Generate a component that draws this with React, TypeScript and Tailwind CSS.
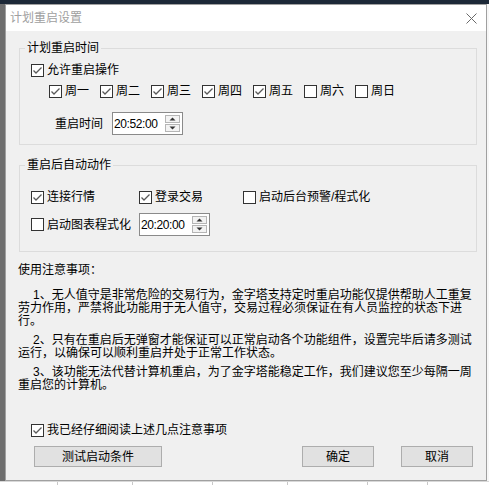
import React from "react";

const font = "font-['Liberation_Sans','Noto_Sans_CJK_SC',sans-serif]";

function Check({ checked }: { checked?: boolean }) {
  return (
    <span className="flex h-[13px] w-[13px] shrink-0 items-center justify-center border border-[#333333] bg-white">
      {checked && (
        <svg width="11" height="11" viewBox="0 0 11 11">
          <path d="M1.5 5.5 L4 8 L9.5 2.5" fill="none" stroke="#5a5a5a" strokeWidth="1.3" />
        </svg>
      )}
    </span>
  );
}

function CheckItem({ label, checked, className = "" }: { label: string; checked?: boolean; className?: string }) {
  return (
    <label className={`flex items-center gap-[3px] ${className}`}>
      <Check checked={checked} />
      <span className="whitespace-nowrap leading-[14px]">{label}</span>
    </label>
  );
}

function TimeSpin({ value }: { value: string }) {
  return (
    <div className="flex h-[23px] w-[71px] items-center border border-[#8a8a8a] bg-white pl-[1px] pr-[2px]">
      <span className="flex-1 text-[12px] tracking-[-0.4px] text-black">{value}</span>
      <div className="flex flex-col gap-[1px]">
        <div className="flex h-[8px] w-[15px] items-center justify-center border border-[#b5b5b5] bg-[#f3f3f3]">
          <svg width="7" height="4" viewBox="0 0 7 4">
            <path d="M0.5 3.5 L3.5 0.5 L6.5 3.5 Z" fill="#333" />
          </svg>
        </div>
        <div className="flex h-[8px] w-[15px] items-center justify-center border border-[#b5b5b5] bg-[#f3f3f3]">
          <svg width="7" height="4" viewBox="0 0 7 4">
            <path d="M0.5 0.5 L3.5 3.5 L6.5 0.5 Z" fill="#333" />
          </svg>
        </div>
      </div>
    </div>
  );
}

const days = [
  { d: "周一", c: true },
  { d: "周二", c: true },
  { d: "周三", c: true },
  { d: "周四", c: true },
  { d: "周五", c: true },
  { d: "周六", c: false },
  { d: "周日", c: false },
];

const notes = [
  [
    "1、无人值守是非常危险的交易行为，金字塔支持定时重启功能仅提供帮助人工重复",
    "劳力作用，严禁将此功能用于无人值守，交易过程必须保证在有人员监控的状态下进",
    "行。",
  ],
  [
    "2、只有在重启后无弹窗才能保证可以正常启动各个功能组件，设置完毕后请多测试",
    "运行，以确保可以顺利重启并处于正常工作状态。",
  ],
  [
    "3、该功能无法代替计算机重启，为了金字塔能稳定工作，我们建议您至少每隔一周",
    "重启您的计算机。",
  ],
];

export default function App() {
  return (
    <div className={`flex h-[485px] w-[489px] flex-col overflow-hidden bg-white text-[12px] text-black ${font}`}>
      <div className="h-[4px] bg-[#1c2837]" />
      <div className="flex h-[477px]">
        <div className="w-[5px] bg-[#6e6e6e]" />
        <div className="flex w-[482px] flex-col border border-[#a0a0a0] bg-[#f0f0f0]">
          {/* title bar */}
          <div className="relative flex h-[26px] items-center bg-white pl-[4px]">
            <span className="text-[12px] text-[#a0a0a0]">计划重启设置</span>
            <svg className="absolute right-[9px] top-[8px]" width="11" height="11" viewBox="0 0 11 11">
              <path d="M0.5 0.5 L10.5 10.5 M10.5 0.5 L0.5 10.5" stroke="#6a6a6a" strokeWidth="1" />
            </svg>
          </div>

          {/* group 1 */}
          <fieldset className="ml-[13px] mt-[10px] w-[458px] border border-[#dcdcdc] pb-[9px]">
            <legend className="ml-[5px] px-[2px] leading-[14px]">计划重启时间</legend>
            <div className="mt-[7px] flex h-[16px] items-center pl-[11px]">
              <CheckItem label="允许重启操作" checked />
            </div>
            <div className="mt-[5px] flex h-[16px] items-center pl-[29px]">
              {days.map((x) => (
                <CheckItem key={x.d} label={x.d} checked={x.c} className="w-[51px]" />
              ))}
            </div>
            <div className="mt-[13px] flex h-[23px] items-center gap-[9px] pl-[35px]">
              <span>重启时间</span>
              <TimeSpin value="20:52:00" />
            </div>
          </fieldset>

          {/* group 2 */}
          <fieldset className="ml-[13px] mt-[13px] w-[458px] border border-[#dcdcdc] pb-[15px]">
            <legend className="ml-[5px] px-[2px] leading-[14px]">重启后自动动作</legend>
            <div className="mt-[17px] flex h-[16px] items-center pl-[11px]">
              <CheckItem label="连接行情" checked className="w-[108px]" />
              <CheckItem label="登录交易" checked className="w-[104px]" />
              <CheckItem label="启动后台预警/程式化" />
            </div>
            <div className="mt-[8px] flex h-[23px] items-center pl-[11px]">
              <CheckItem label="启动图表程式化" className="w-[108px]" />
              <TimeSpin value="20:20:00" />
            </div>
          </fieldset>

          {/* notes */}
          <div className="mt-[12px] pl-[12px] leading-[13px]">
            <div>使用注意事项：</div>
            {notes.map((p, i) => (
              <div key={i} className={i === 0 ? "mt-[12px]" : "mt-[6px]"}>
                {p.map((line, j) => (
                  <div key={j} className={`whitespace-nowrap ${j === 0 ? "pl-[15px]" : ""}`}>
                    {line}
                  </div>
                ))}
              </div>
            ))}
          </div>

          <div className="mt-[30px] flex h-[16px] items-center pl-[25px]">
            <CheckItem label="我已经仔细阅读上述几点注意事项" checked />
          </div>

          <div className="mt-[8px] flex items-center pl-[28px]">
            <button className="h-[21px] w-[128px] border border-[#adadad] bg-[#e1e1e1]">测试启动条件</button>
            <button className="ml-[140px] h-[21px] w-[72px] border border-[#adadad] bg-[#e1e1e1]">确定</button>
            <button className="ml-[27px] h-[21px] w-[72px] border border-[#adadad] bg-[#e1e1e1]">取消</button>
          </div>
        </div>
        <div className="flex-1 bg-[#f7f7f7]" />
      </div>
      <div className="flex flex-1 border-t border-[#d8d8d8] bg-white">
        <div className="w-[58px] border-r border-[#c8c8c8]" />
        <div className="w-[75px] border-r border-[#c8c8c8]" />
        <div className="w-[80px] border-r border-[#c8c8c8]" />
        <div className="w-[75px] border-r border-[#c8c8c8]" />
        <div className="w-[80px] border-r border-[#c8c8c8]" />
        <div className="w-[60px] border-r border-[#c8c8c8]" />
      </div>
    </div>
  );
}
